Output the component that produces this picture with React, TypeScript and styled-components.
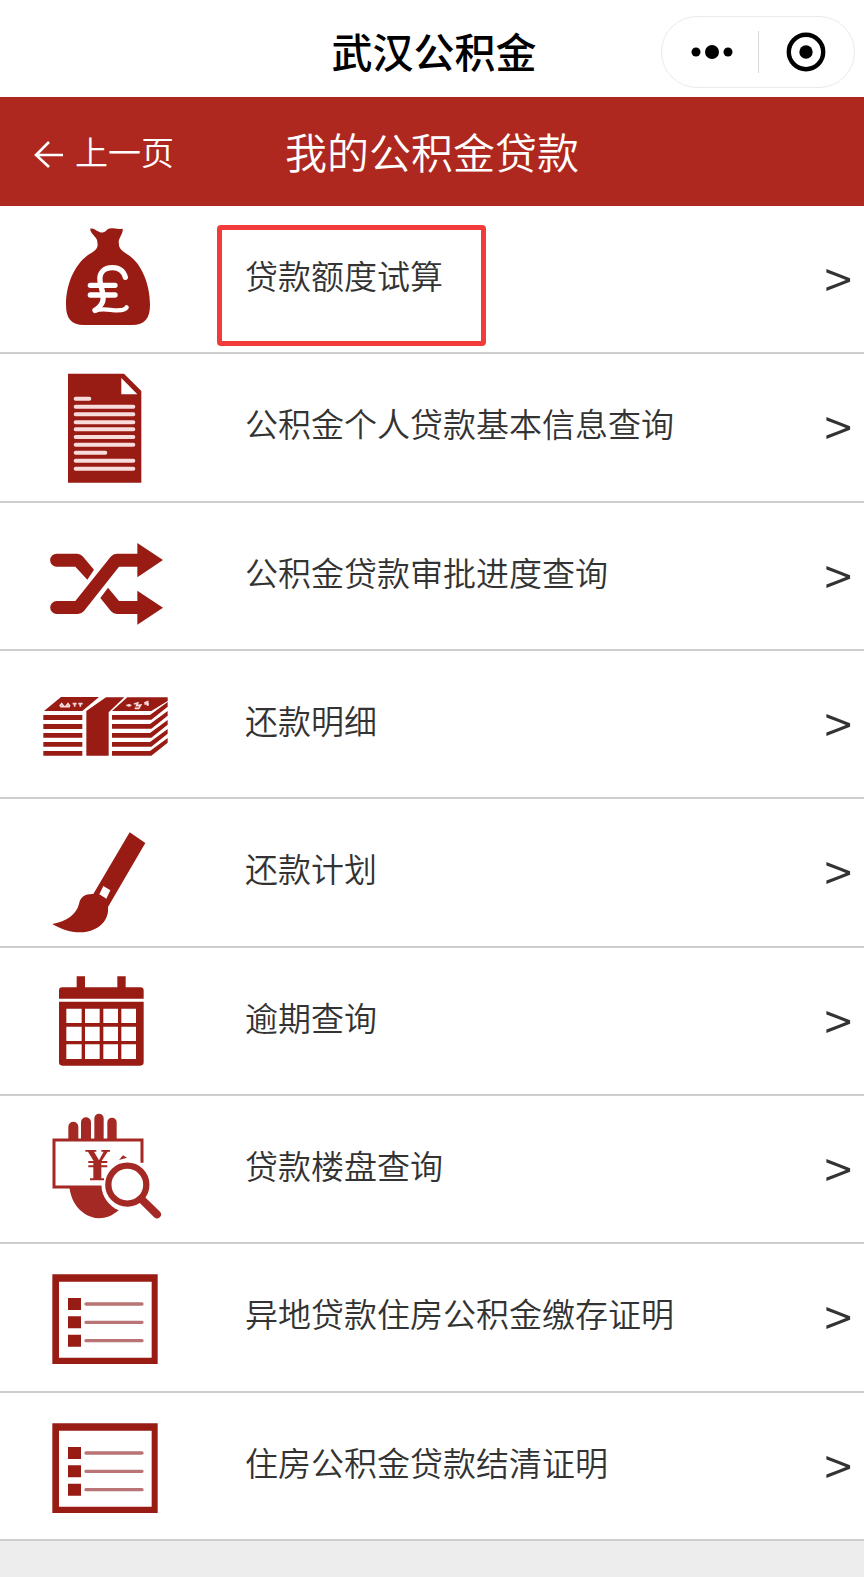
import React from "react";
import styled, { createGlobalStyle } from "styled-components";

const GlobalStyle = createGlobalStyle`
  * { box-sizing: border-box; }
  body {
    margin: 0;
    background: #ededed;
    font-family: "Noto Sans CJK SC", sans-serif;
    color: #333;
  }
`;

const Page = styled.div`
  display: flex;
  flex-direction: column;
  min-height: 100vh;
`;

const TitleBar = styled.header`
  display: grid;
  grid-template-columns: 1fr auto 1fr;
  align-items: center;
  height: 97px;
  padding: 7px 9px 0 13px;
  background: #fff;
`;

const AppTitle = styled.h1`
  grid-column: 2;
  margin: 0;
  padding-bottom: 4px;
  font-size: 41px;
  font-weight: 500;
  line-height: 60px;
  color: #000;
`;

const Capsule = styled.div`
  justify-self: end;
  display: flex;
  align-items: center;
  width: 194px;
  height: 72px;
  border: 1px solid #ebebeb;
  border-radius: 36px;
`;

const CapsuleButton = styled.button`
  flex: 1;
  display: flex;
  align-items: center;
  justify-content: center;
  height: 100%;
  padding: 0;
  border: 0;
  background: none;
  cursor: pointer;
`;

const CapsuleDivider = styled.span`
  width: 1px;
  height: 42px;
  background: #d8d8d8;
`;

const NavBar = styled.nav`
  display: grid;
  grid-template-columns: 1fr auto 1fr;
  align-items: center;
  height: 109px;
  padding: 0 34px 2px;
  background: #ae2820;
  color: #fff;
`;

const BackLink = styled.a`
  display: flex;
  align-items: center;
  gap: 11px;
  font-size: 33px;
  font-weight: 350;
  line-height: 48px;
  color: inherit;
  text-decoration: none;
`;

const NavTitle = styled.h2`
  margin: 0;
  font-size: 42px;
  font-weight: 350;
  line-height: 60px;
`;

const Menu = styled.ul`
  flex: 1;
  display: grid;
  grid-auto-rows: 1fr;
  margin: 0;
  padding: 0;
  list-style: none;
  background: #fff;
`;

const MenuItem = styled.li`
  min-height: 148px;
  border-bottom: 2px solid #cdcdcd;
`;

const MenuLink = styled.a`
  display: grid;
  grid-template-columns: 160px 1fr auto;
  column-gap: 55px;
  height: 100%;
  padding: 0 12px 0 30px;
  color: inherit;
  text-decoration: none;
`;

const IconBox = styled.svg`
  display: block;
  width: 160px;
  height: 146px;
  color: #981b14;
`;

const Label = styled.span`
  position: relative;
  align-self: center;
  padding-bottom: 8px;
  font-size: 33px;
  font-weight: 350;
  line-height: 48px;
`;

const Highlight = styled.span`
  position: absolute;
  top: -26px;
  left: -28px;
  width: 269px;
  height: 121px;
  border: 5px solid #f23c3c;
  border-radius: 4px;
  pointer-events: none;
`;

const Chevron = styled.span`
  align-self: center;
  padding-bottom: 4px;
  font-size: 50px;
  font-weight: 350;
  line-height: 48px;
`;

const BottomArea = styled.footer`
  height: 36px;
`;

/* Icons are drawn at three units per pixel; `top` places the artwork in its row. */
function Icon({ top, children }: { top: number; children: React.ReactNode }) {
  return (
    <IconBox viewBox={`0 ${top} 480 438`} fill="currentColor" aria-hidden="true">
      {children}
    </IconBox>
  );
}

const MoneyBag = () => (
  <Icon top={-12}>
    <path d="M181 56C190 54 196 61 207 65C220 72 226 64 234 57C245 51 257 59 278 56C280 68 269 80 266 94L267 106C269 118 279 125 295 135C334 160 360 222 360 284C360 326 344 344 306 345H162C124 344 108 326 108 284C108 222 134 165 173 136C189 126 202 119 203 106L202 96C203 82 179 71 181 56Z" />
    <g fill="none" stroke="#fff" strokeLinecap="round" strokeLinejoin="round">
      <path d="M286 202C280 181 265 173 248 173C221 173 207 188 210 213C213 237 224 254 218 275C213 288 205 295 195 301" strokeWidth="16" />
      <path d="M196 302C216 293 241 301 263 301C277 301 286 299 290 292" strokeWidth="13" />
      <path d="M181 226H255M181 255H255" strokeWidth="16" />
    </g>
  </Icon>
);

const Document = () => (
  <Icon top={-17}>
    <path d="M114 42H282L334 94V369H114Z" />
    <path d="M274 55V104H322Z" fill="#fff" />
    <path
      d="M137 117H178M137 141H310M137 164H310M137 188H310M137 209H310M137 232H310M137 255H310M137 279H226M137 303H310M137 327H310"
      stroke="#f8dcdb"
      strokeWidth="12"
      strokeLinecap="round"
    />
  </Icon>
);

const Shuffle = () => (
  <Icon top={-52}>
    <path d="M80 100H142Q151 100 158 108L192 148L172 178L136 139H80A19 19 0 0 1 80 100Z" />
    <path d="M80 242H136L242 109Q250 100 260 100H322V68L399 119L322 171V139H267L162 272Q154 281 144 281H80A19 19 0 0 1 80 242Z" />
    <path d="M234 202L267 242H322V211L399 262L322 313V281H260Q250 281 243 273L211 233Z" />
  </Icon>
);

const CashStack = () => (
  <Icon top={-87}>
    <path d="M93 51H207L157 93H42Z" />
    <path d="M228 52H283L236 97V227H169V93Z" />
    <path d="M292 52H413V63L364 93H246Z" />
    <path d="M40 105H157V120H40ZM40 132H157V147H40ZM40 159H157V173H40ZM40 186H157V200H40ZM40 213H157V227H40Z" />
    {[0, 27, 54, 81, 108].map((y) => (
      <path key={y} d={`M246 ${105 + y}H360L413 ${66 + y}V${80 + y}L364 ${119 + y}H246Z`} />
    ))}
    <path
      d="M89 79L95 71L101 79M108 79L114 71L120 79M91 80H120M128 71H140M134 71V80M145 71H158M151 71V80M289 76H304M297 72V80M312 72L323 69L320 77L332 75L326 85H314M343 69L353 65V78M343 72H357"
      fill="none"
      stroke="#f8dcdb"
      strokeWidth="5"
    />
  </Icon>
);

const Brush = () => (
  <Icon top={-62}>
    <path d="M299 38L346 70L234 262C238 300 208 337 150 338C119 338 91 327 67 313C111 304 138 286 147 253C151 230 167 222 190 223Z" />
    <path d="M220 199L241 212L229 237L208 224Z" fill="#fff" />
  </Icon>
);

const Calendar = () => (
  <Icon top={-37}>
    <path d="M140 48H165V81H262V48H287V81H331Q341 81 341 91V115H87V91Q87 81 97 81H140Z" />
    <path
      fillRule="evenodd"
      d="M87 124H341V306Q341 316 331 316H97Q87 316 87 306ZM109 145V188H155V145ZM165 145V188H209V145ZM220 145V188H264V145ZM274 145V188H318V145ZM109 199V242H155V199ZM165 199V242H209V199ZM220 199V242H264V199ZM274 199V242H318V199ZM109 252V296H155V252ZM165 252V296H209V252ZM220 252V296H264V252ZM274 252V296H318V252Z"
    />
  </Icon>
);

const HandSearch = () => (
  <Icon top={-12}>
    <g fill="#a42823">
      <path d="M115 118V80A15 15 0 0 1 145 80V118ZM153 118V67A15 15 0 0 1 183 67V118ZM193 118V55A14 14 0 0 1 221 55V118ZM232 118V67A14 14 0 0 1 260 67V118Z" />
      <path d="M118 258H214C216 288 235 318 266 331C249 346 230 355 205 355C157 351 122 310 118 258Z" />
      <path d="M267 180L279 166L291 173Z" />
      <path d="M166 150H199V155H192L207 181L221 155H214V150H240V155H233L215 183H232V189H214V196H232V202H214V235H222V241H180V235H190V202H175V196H190V189H175V183H191L174 155H166Z" />
    </g>
    <g fill="none" stroke="#a42823">
      <path d="M336 188V120H72V261H214" strokeWidth="9" />
      <circle cx="292" cy="254" r="57" strokeWidth="19" />
      <path d="M337 300L381 343" strokeWidth="24" strokeLinecap="round" />
    </g>
  </Icon>
);

const Certificate = () => (
  <Icon top={-47}>
    <path fillRule="evenodd" d="M67 44H383V313H67ZM87 66V294H365V66Z" />
    <path d="M114 115H153V151H114ZM114 170H153V206H114ZM114 225H153V261H114Z" />
    <path d="M168 133H336M168 188H336M168 243H336" stroke="#b97575" strokeWidth="10" strokeLinecap="round" />
  </Icon>
);

const items = [
  { label: "贷款额度试算", icon: MoneyBag, highlighted: true },
  { label: "公积金个人贷款基本信息查询", icon: Document },
  { label: "公积金贷款审批进度查询", icon: Shuffle },
  { label: "还款明细", icon: CashStack },
  { label: "还款计划", icon: Brush },
  { label: "逾期查询", icon: Calendar },
  { label: "贷款楼盘查询", icon: HandSearch },
  { label: "异地贷款住房公积金缴存证明", icon: Certificate },
  { label: "住房公积金贷款结清证明", icon: Certificate },
];

export default function App() {
  return (
    <Page>
      <GlobalStyle />
      <TitleBar>
        <AppTitle>武汉公积金</AppTitle>
        <Capsule>
          <CapsuleButton aria-label="更多">
            <svg width="48" height="16" viewBox="-4 0 48 16">
              <circle cx="6" cy="8" r="4.5" />
              <circle cx="22" cy="8" r="7" />
              <circle cx="38" cy="8" r="4.5" />
            </svg>
          </CapsuleButton>
          <CapsuleDivider />
          <CapsuleButton aria-label="关闭">
            <svg width="40" height="40" viewBox="0 0 40 40">
              <circle cx="20" cy="20" r="17.2" fill="none" stroke="#000" strokeWidth="4.4" />
              <circle cx="20" cy="20" r="6.7" />
            </svg>
          </CapsuleButton>
        </Capsule>
      </TitleBar>
      <NavBar>
        <BackLink href="#back">
          <svg width="30" height="34" viewBox="0 -5 30 34" fill="none" stroke="currentColor" strokeWidth="2.6" aria-hidden="true">
            <path d="M29 16H2M15 3L2 16L15 28" />
          </svg>
          上一页
        </BackLink>
        <NavTitle>我的公积金贷款</NavTitle>
      </NavBar>
      <Menu>
        {items.map(({ label, icon: ItemIcon, highlighted }) => (
          <MenuItem key={label}>
            <MenuLink href="#detail">
              <ItemIcon />
              <Label>
                {label}
                {highlighted && <Highlight />}
              </Label>
              <Chevron aria-hidden="true">&gt;</Chevron>
            </MenuLink>
          </MenuItem>
        ))}
      </Menu>
      <BottomArea />
    </Page>
  );
}
